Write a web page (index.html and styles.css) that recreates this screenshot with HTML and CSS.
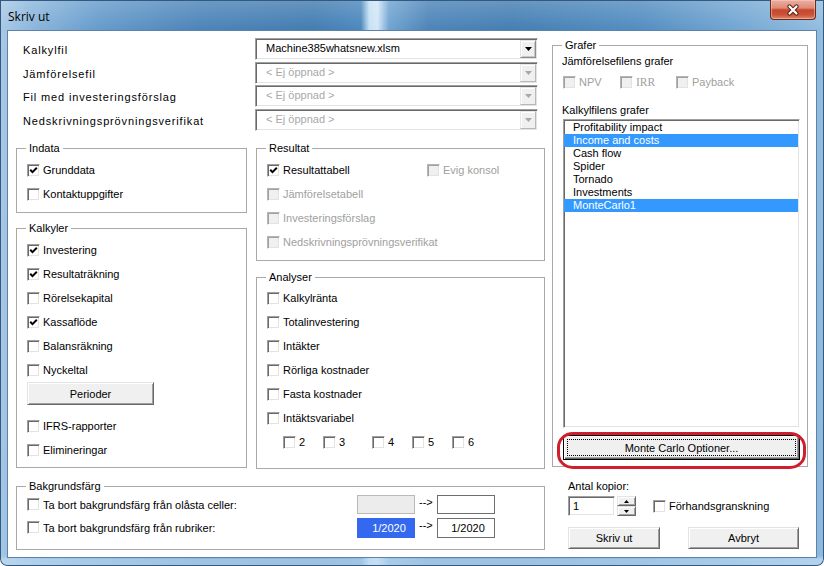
FILE: index.html
```html
<!DOCTYPE html>
<html lang="sv">
<head>
<meta charset="utf-8">
<title>Skriv ut</title>
<link rel="stylesheet" href="styles.css">
</head>
<body>
<div class="window">
  <div class="titlebar">
    <span class="title">Skriv ut</span>
    <div class="close-btn">
      <svg width="14" height="12" viewBox="0 0 14 12"><path d="M3.5 2.5 L10.5 9.5 M10.5 2.5 L3.5 9.5" stroke="#5a2216" stroke-width="4.2" stroke-linecap="round"/><path d="M3.5 2.5 L10.5 9.5 M10.5 2.5 L3.5 9.5" stroke="#fff" stroke-width="2.2" stroke-linecap="round"/></svg>
    </div>
  </div>
  <div class="client">
    <div class="main">
      <div class="files">
        <div class="file-row">
          <span class="file-label">Kalkylfil</span>
          <div class="combo sunken"><span class="combo-text">Machine385whatsnew.xlsm</span><span class="combo-btn"><svg width="7" height="4" viewBox="0 0 7 4"><path d="M0 0h7L3.5 4z" fill="currentColor"/></svg></span></div>
        </div>
        <div class="file-row">
          <span class="file-label">Jämförelsefil</span>
          <div class="combo sunken disabled"><span class="combo-text">&lt; Ej öppnad &gt;</span><span class="combo-btn"><svg width="7" height="4" viewBox="0 0 7 4"><path d="M0 0h7L3.5 4z" fill="currentColor"/></svg></span></div>
        </div>
        <div class="file-row">
          <span class="file-label">Fil med investeringsförslag</span>
          <div class="combo sunken disabled"><span class="combo-text">&lt; Ej öppnad &gt;</span><span class="combo-btn"><svg width="7" height="4" viewBox="0 0 7 4"><path d="M0 0h7L3.5 4z" fill="currentColor"/></svg></span></div>
        </div>
        <div class="file-row">
          <span class="file-label">Nedskrivningsprövningsverifikat</span>
          <div class="combo sunken disabled"><span class="combo-text">&lt; Ej öppnad &gt;</span><span class="combo-btn"><svg width="7" height="4" viewBox="0 0 7 4"><path d="M0 0h7L3.5 4z" fill="currentColor"/></svg></span></div>
        </div>
      </div>

      <div class="groups">
        <div class="col-left">
          <fieldset class="grp grp-indata">
            <legend>Indata</legend>
            <div class="cbrow"><span class="cb"><svg width="9" height="9" viewBox="0 0 9 9"><path d="M1.2 3.8 L3.5 6.1 L7.8 1.8" fill="none" stroke="#000" stroke-width="2"/></svg></span><span>Grunddata</span></div>
            <div class="cbrow"><span class="cb"></span><span>Kontaktuppgifter</span></div>
          </fieldset>
          <fieldset class="grp grp-kalkyler">
            <legend>Kalkyler</legend>
            <div class="cbrow"><span class="cb"><svg width="9" height="9" viewBox="0 0 9 9"><path d="M1.2 3.8 L3.5 6.1 L7.8 1.8" fill="none" stroke="#000" stroke-width="2"/></svg></span><span>Investering</span></div>
            <div class="cbrow"><span class="cb"><svg width="9" height="9" viewBox="0 0 9 9"><path d="M1.2 3.8 L3.5 6.1 L7.8 1.8" fill="none" stroke="#000" stroke-width="2"/></svg></span><span>Resultaträkning</span></div>
            <div class="cbrow"><span class="cb"></span><span>Rörelsekapital</span></div>
            <div class="cbrow"><span class="cb"><svg width="9" height="9" viewBox="0 0 9 9"><path d="M1.2 3.8 L3.5 6.1 L7.8 1.8" fill="none" stroke="#000" stroke-width="2"/></svg></span><span>Kassaflöde</span></div>
            <div class="cbrow"><span class="cb"></span><span>Balansräkning</span></div>
            <div class="cbrow"><span class="cb"></span><span>Nyckeltal</span></div>
            <button class="btn btn-perioder">Perioder</button>
            <div class="cbrow"><span class="cb"></span><span>IFRS-rapporter</span></div>
            <div class="cbrow"><span class="cb"></span><span>Elimineringar</span></div>
          </fieldset>
        </div>
        <div class="col-mid">
          <fieldset class="grp grp-resultat">
            <legend>Resultat</legend>
            <div class="cbrow">
              <div class="cbitem res-first"><span class="cb"><svg width="9" height="9" viewBox="0 0 9 9"><path d="M1.2 3.8 L3.5 6.1 L7.8 1.8" fill="none" stroke="#000" stroke-width="2"/></svg></span><span>Resultattabell</span></div>
              <div class="cbitem dis"><span class="cb cb-dis"></span><span>Evig konsol</span></div>
            </div>
            <div class="cbrow dis"><span class="cb cb-dis"></span><span>Jämförelsetabell</span></div>
            <div class="cbrow dis"><span class="cb cb-dis"></span><span>Investeringsförslag</span></div>
            <div class="cbrow dis"><span class="cb cb-dis"></span><span>Nedskrivningsprövningsverifikat</span></div>
          </fieldset>
          <fieldset class="grp grp-analyser">
            <legend>Analyser</legend>
            <div class="cbrow"><span class="cb"></span><span>Kalkylränta</span></div>
            <div class="cbrow"><span class="cb"></span><span>Totalinvestering</span></div>
            <div class="cbrow"><span class="cb"></span><span>Intäkter</span></div>
            <div class="cbrow"><span class="cb"></span><span>Rörliga kostnader</span></div>
            <div class="cbrow"><span class="cb"></span><span>Fasta kostnader</span></div>
            <div class="cbrow"><span class="cb"></span><span>Intäktsvariabel</span></div>
            <div class="cbrow numrow">
              <div class="cbitem"><span class="cb"></span><span>2</span></div>
              <div class="cbitem"><span class="cb"></span><span>3</span></div>
              <div class="cbitem"><span class="cb"></span><span>4</span></div>
              <div class="cbitem"><span class="cb"></span><span>5</span></div>
              <div class="cbitem"><span class="cb"></span><span>6</span></div>
            </div>
          </fieldset>
        </div>
      </div>

      <fieldset class="grp grp-bg">
        <legend>Bakgrundsfärg</legend>
        <div class="bgrow">
          <div class="cbitem bg-lab"><span class="cb"></span><span>Ta bort bakgrundsfärg från olåsta celler:</span></div>
          <span class="swatch grey"></span>
          <span class="arrow">--&gt;</span>
          <span class="swatch white"></span>
        </div>
        <div class="bgrow">
          <div class="cbitem bg-lab"><span class="cb"></span><span>Ta bort bakgrundsfärg från rubriker:</span></div>
          <span class="swatch blue">1/2020</span>
          <span class="arrow">--&gt;</span>
          <span class="swatch white tall">1/2020</span>
        </div>
      </fieldset>
    </div>

    <div class="side">
      <fieldset class="grp grp-grafer">
        <legend>Grafer</legend>
        <div class="sublabel">Jämförelsefilens grafer</div>
        <div class="cmprow dis">
          <div class="cbitem"><span class="cb cb-dis"></span><span>NPV</span></div>
          <div class="cbitem"><span class="cb cb-dis"></span><span class="serif">IRR</span></div>
          <div class="cbitem"><span class="cb cb-dis"></span><span>Payback</span></div>
        </div>
        <div class="sublabel sublabel-2">Kalkylfilens grafer</div>
        <div class="listbox sunken">
          <div class="list-item">Profitability impact</div>
          <div class="list-item sel">Income and costs</div>
          <div class="list-item">Cash flow</div>
          <div class="list-item">Spider</div>
          <div class="list-item">Tornado</div>
          <div class="list-item">Investments</div>
          <div class="list-item sel">MonteCarlo1</div>
        </div>
        <button class="btn btn-mc"><span class="focus">Monte Carlo Optioner...</span></button>
      </fieldset>
      <div class="copies-label">Antal kopior:</div>
      <div class="spinrow">
        <span class="spin-input sunken">1</span>
        <span class="spin-btns">
          <span class="spin-b"><svg width="5" height="3" viewBox="0 0 5 3"><path d="M0 3h5L2.5 0z" fill="#000"/></svg></span>
          <span class="spin-b"><svg width="5" height="3" viewBox="0 0 5 3"><path d="M0 0h5L2.5 3z" fill="#000"/></svg></span>
        </span>
        <div class="cbitem preview"><span class="cb"></span><span>Förhandsgranskning</span></div>
      </div>
      <div class="actions">
        <button class="btn btn-print">Skriv ut</button>
        <button class="btn btn-cancel">Avbryt</button>
      </div>
      <div class="annot"></div>
    </div>
  </div>
</div>
</body>
</html>
```

FILE: styles.css
```css
* { box-sizing: border-box; }

html, body {
  margin: 0;
  padding: 0;
}

body {
  width: 824px;
  height: 566px;
  overflow: hidden;
  background: #fff;
  font-family: "Liberation Sans", Arial, sans-serif;
  font-size: 11px;
  color: #000;
}

/* ---------- window chrome ---------- */
.window {
  width: 824px;
  height: 566px;
  display: flex;
  flex-direction: column;
  border-radius: 0 0 7px 7px;
  box-shadow: inset 0 0 0 1px #34587e;
  background:
    linear-gradient(180deg, rgba(255,255,255,0) 0, rgba(255,255,255,0) 556px, rgba(190,218,242,0.75) 559px, rgba(190,218,242,0.75) 566px),
    linear-gradient(180deg, rgba(255,255,255,0.22) 0, rgba(255,255,255,0.04) 30px, rgba(255,255,255,0) 100%),
    linear-gradient(90deg, #a5c7e5 0, #86b3da 4%, #5f97c9 12%, #457fb6 24%, #3b77ae 38%, #4583bb 43.8%, #c4dff4 44.8%, #d2e7f8 45.8%, #6aa0cf 47.2%, #457fb6 52%, #3d79b0 62%, #4d89bf 78%, #6fa4d1 90%, #8fbade 100%);
}

.titlebar {
  height: 30px;
  flex: none;
  display: flex;
  align-items: flex-start;
}

.title {
  font-family: "Open Sans", "Noto Sans", sans-serif;
  font-size: 12px;
  line-height: 16px;
  margin: 9px 0 0 8px;
  color: #000;
}

.close-btn {
  margin-left: auto;
  margin-right: 8px;
  width: 46px;
  height: 20px;
  display: flex;
  align-items: center;
  justify-content: center;
  border: 1px solid #6b2a1e;
  border-top: none;
  border-radius: 0 0 4px 4px;
  background: linear-gradient(180deg, #eab0a2 0%, #de8c77 42%, #c8462c 52%, #c9543a 78%, #dd8a6c 100%);
  box-shadow: inset 0 0 0 1px rgba(255, 215, 200, 0.45);
}

.client {
  flex: none;
  margin: 0 7px;
  height: 528px;
  background: #fff;
  border: 1px solid #5f82a8;
  display: flex;
  gap: 7px;
  padding: 7px 0 0 8px;
}

/* ---------- generic controls ---------- */
.sunken {
  border: 1px solid;
  border-color: #a0a0a0 #fff #fff #a0a0a0;
  box-shadow: inset 1px 1px #696969, inset -1px -1px #e3e3e3;
  background: #fff;
}

.btn {
  display: flex;
  align-items: center;
  justify-content: center;
  padding: 0;
  margin: 0;
  font-family: "Liberation Sans", Arial, sans-serif;
  font-size: 11px;
  color: #000;
  background: #f0f0f0;
  border: 1px solid;
  border-color: #e3e3e3 #696969 #696969 #e3e3e3;
  box-shadow: inset 1px 1px #fff, inset -1px -1px #a0a0a0;
}

.cb {
  display: block;
  flex: none;
  width: 13px;
  height: 13px;
  padding: 1px;
  margin-right: 3px;
  border: 1px solid;
  border-color: #a0a0a0 #fff #fff #a0a0a0;
  box-shadow: inset 1px 1px #696969, inset -1px -1px #e3e3e3;
  background: #fff;
}

.cb svg { display: block; }

.cb-dis {
  background: #f0f0f0;
  border-color: #b4b4b4 #fff #fff #b4b4b4;
  box-shadow: inset 1px 1px #a0a0a0, inset -1px -1px #e3e3e3;
}

.dis { color: #a0a0a0; }

.cbrow {
  display: flex;
  align-items: center;
  height: 24px;
  white-space: nowrap;
}

.cbitem {
  display: flex;
  align-items: center;
  white-space: nowrap;
}

/* ---------- main column ---------- */
.main {
  width: 529px;
  flex: none;
  display: flex;
  flex-direction: column;
}

.files {
  display: flex;
  flex-direction: column;
  padding-left: 7px;
}

.file-row {
  height: 23.5px;
  display: flex;
  align-items: flex-start;
}

.file-label {
  width: 232px;
  flex: none;
  letter-spacing: 0.85px;
  line-height: 13px;
  padding-top: 6px;
  white-space: nowrap;
}

.combo {
  width: 283px;
  height: 22px;
  display: flex;
  padding: 1px;
}

.combo-text {
  flex: 1;
  padding-left: 9px;
  line-height: 17px;
  white-space: nowrap;
}

.combo-btn {
  width: 16px;
  flex: none;
  display: flex;
  align-items: center;
  justify-content: center;
  background: #f0f0f0;
  border: 1px solid;
  border-color: #e3e3e3 #8c8c8c #8c8c8c #e3e3e3;
  box-shadow: inset 1px 1px #fff, inset -1px -1px #c8c8c8;
  color: #000;
}

.combo.disabled .combo-text,
.combo.disabled .combo-btn { color: #a8a8a8; }

.combo.disabled .combo-btn {
  border-color: #e8e8e8 #b8b8b8 #b8b8b8 #e8e8e8;
  box-shadow: inset 1px 1px #fff;
}

.groups {
  display: flex;
  gap: 9px;
  margin-top: 9px;
}

.col-left {
  width: 231px;
  flex: none;
  display: flex;
  flex-direction: column;
  gap: 8px;
}

.col-mid {
  width: 289px;
  flex: none;
  display: flex;
  flex-direction: column;
  gap: 9px;
}

.grp {
  margin: 0;
  min-width: 0;
  border: 1px solid #a9a9a9;
  padding: 3px 6px 6px 10px;
}

.grp legend {
  padding: 0 3px;
  margin-left: -1px;
  line-height: 14px;
  font-size: 11px;
}

.grp-kalkyler { padding-bottom: 5px; }

.btn-perioder {
  width: 127px;
  height: 23px;
  margin-bottom: 9px;
}

.res-first { width: 160px; }

.grp-analyser {
  padding-top: 2px;
  padding-bottom: 14px;
}

.numrow { padding-left: 16px; }
.numrow .cbitem:nth-child(1) { width: 40px; }
.numrow .cbitem:nth-child(2) { width: 49px; }
.numrow .cbitem:nth-child(3) { width: 40px; }
.numrow .cbitem:nth-child(4) { width: 40px; }

.grp-bg {
  margin-top: 10px;
  padding-top: 0;
  padding-bottom: 10px;
}

.bgrow {
  display: flex;
  align-items: center;
  height: 23px;
}

.bg-lab { width: 330px; flex: none; }

.swatch {
  width: 58px;
  height: 19px;
  flex: none;
  display: flex;
  align-items: center;
  justify-content: center;
}

.swatch.grey {
  background: #ececec;
  border: 1px solid #b9b9b9;
}

.swatch.white {
  background: #fff;
  border: 1px solid #6f6f6f;
  padding-left: 4px;
}

.swatch.tall { height: 20px; }

.swatch.blue {
  height: 20px;
  background: #3469ef;
  color: #fff;
  padding-left: 6px;
}

.arrow {
  width: 22px;
  flex: none;
  padding-left: 4px;
  line-height: 12px;
  margin-top: -5px;
}

/* ---------- side column ---------- */
.side {
  width: 256px;
  flex: none;
  display: flex;
  flex-direction: column;
  position: relative;
}

.grp-grafer {
  padding: 2px 7px 6px 10px;
}

.sublabel {
  line-height: 14px;
  margin-left: -1px;
}

.sublabel-2 { margin-top: 12px; }

.cmprow {
  display: flex;
  align-items: center;
  height: 18px;
  margin-top: 5px;
}

.cmprow .cbitem:nth-child(1) { width: 57px; }
.cmprow .cbitem:nth-child(2) { width: 56px; }

.serif {
  font-family: "Liberation Serif", "Times New Roman", serif;
  font-size: 11.5px;
}

.listbox {
  height: 309px;
  margin-top: 2px;
  padding: 1px 1px 1px 0;
}

.list-item {
  height: 13px;
  line-height: 13px;
  padding-left: 9px;
  white-space: nowrap;
}

.list-item.sel {
  background: #3399ff;
  color: #fff;
}

.btn-mc {
  width: 100%;
  height: 25px;
  margin-top: 7px;
  padding: 3px;
  border: 1px solid #000;
  box-shadow: inset 1px 1px #fff, inset -1px -1px #696969, inset -2px -2px #a0a0a0;
}

.btn-mc .focus {
  flex: 1;
  align-self: stretch;
  display: flex;
  align-items: center;
  justify-content: center;
  border: 1px dotted #000;
}

.copies-label {
  margin-top: 12px;
  padding-left: 16px;
  line-height: 14px;
}

.spinrow {
  margin-top: 3px;
  height: 20px;
  display: flex;
  align-items: center;
  padding-left: 16px;
}

.spin-input {
  width: 47px;
  height: 20px;
  padding-left: 4px;
  line-height: 18px;
}

.spin-btns {
  width: 19px;
  height: 20px;
  margin-left: 2px;
  display: flex;
  flex-direction: column;
}

.spin-b {
  flex: 1;
  display: flex;
  align-items: center;
  justify-content: center;
  background: #f0f0f0;
  border: 1px solid;
  border-color: #e3e3e3 #696969 #696969 #e3e3e3;
  box-shadow: inset 1px 1px #fff, inset -1px -1px #a0a0a0;
}

.spin-b svg { display: block; }

.preview { margin-left: 17px; }

.actions {
  margin-top: 11px;
  display: flex;
  padding-left: 16px;
}

.btn-print {
  width: 92px;
  height: 22px;
}

.btn-cancel {
  width: 111px;
  height: 22px;
  margin-left: 28px;
}

/* red annotation drawn over the Monte Carlo button */
.annot {
  position: absolute;
  left: 5px;
  top: 394px;
  width: 249px;
  height: 37px;
  border: 3px solid #cf1f2c;
  border-radius: 16px / 15px;
  pointer-events: none;
}
```
